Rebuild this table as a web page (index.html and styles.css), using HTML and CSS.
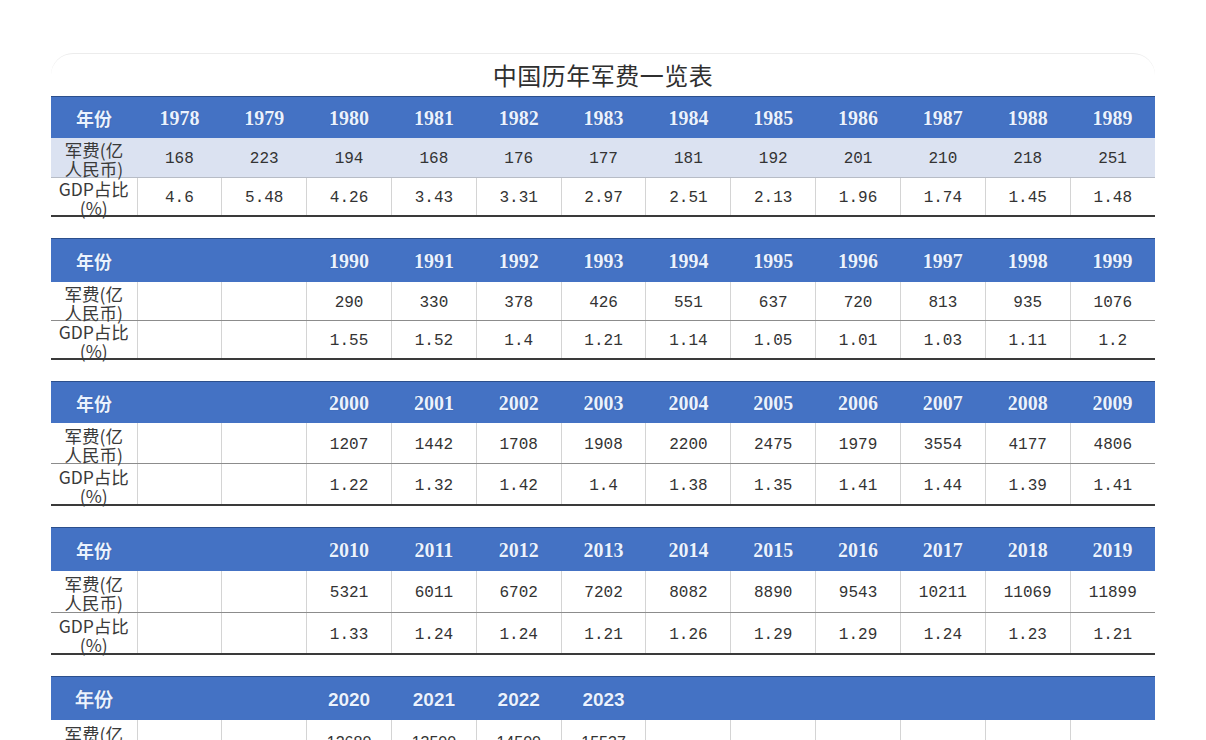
FILE: index.html
```html
<!DOCTYPE html>
<html lang="zh-CN">
<head>
<meta charset="utf-8">
<title>中国历年军费一览表</title>
<link rel="stylesheet" href="styles.css">
</head>
<body>
<div class="card">
  <h1 class="title">中国历年军费一览表</h1>

  <table class="sheet t1">
    <colgroup><col class="c-label"><col span="12"></colgroup>
    <tr class="head"><th class="lbl">年份</th><th>1978</th><th>1979</th><th>1980</th><th>1981</th><th>1982</th><th>1983</th><th>1984</th><th>1985</th><th>1986</th><th>1987</th><th>1988</th><th>1989</th></tr>
    <tr class="spend tint"><td class="lbl"><div class="lbl-in">军费(亿<br>人民币)</div></td><td>168</td><td>223</td><td>194</td><td>168</td><td>176</td><td>177</td><td>181</td><td>192</td><td>201</td><td>210</td><td>218</td><td>251</td></tr>
    <tr class="gdp"><td class="lbl"><div class="lbl-in">GDP占比<br>(%)</div></td><td>4.6</td><td>5.48</td><td>4.26</td><td>3.43</td><td>3.31</td><td>2.97</td><td>2.51</td><td>2.13</td><td>1.96</td><td>1.74</td><td>1.45</td><td>1.48</td></tr>
  </table>

  <table class="sheet t2">
    <colgroup><col class="c-label"><col span="12"></colgroup>
    <tr class="head"><th class="lbl">年份</th><th></th><th></th><th>1990</th><th>1991</th><th>1992</th><th>1993</th><th>1994</th><th>1995</th><th>1996</th><th>1997</th><th>1998</th><th>1999</th></tr>
    <tr class="spend"><td class="lbl"><div class="lbl-in">军费(亿<br>人民币)</div></td><td></td><td></td><td>290</td><td>330</td><td>378</td><td>426</td><td>551</td><td>637</td><td>720</td><td>813</td><td>935</td><td>1076</td></tr>
    <tr class="gdp"><td class="lbl"><div class="lbl-in">GDP占比<br>(%)</div></td><td></td><td></td><td>1.55</td><td>1.52</td><td>1.4</td><td>1.21</td><td>1.14</td><td>1.05</td><td>1.01</td><td>1.03</td><td>1.11</td><td>1.2</td></tr>
  </table>

  <table class="sheet t3">
    <colgroup><col class="c-label"><col span="12"></colgroup>
    <tr class="head"><th class="lbl">年份</th><th></th><th></th><th>2000</th><th>2001</th><th>2002</th><th>2003</th><th>2004</th><th>2005</th><th>2006</th><th>2007</th><th>2008</th><th>2009</th></tr>
    <tr class="spend"><td class="lbl"><div class="lbl-in">军费(亿<br>人民币)</div></td><td></td><td></td><td>1207</td><td>1442</td><td>1708</td><td>1908</td><td>2200</td><td>2475</td><td>1979</td><td>3554</td><td>4177</td><td>4806</td></tr>
    <tr class="gdp"><td class="lbl"><div class="lbl-in">GDP占比<br>(%)</div></td><td></td><td></td><td>1.22</td><td>1.32</td><td>1.42</td><td>1.4</td><td>1.38</td><td>1.35</td><td>1.41</td><td>1.44</td><td>1.39</td><td>1.41</td></tr>
  </table>

  <table class="sheet t4">
    <colgroup><col class="c-label"><col span="12"></colgroup>
    <tr class="head"><th class="lbl">年份</th><th></th><th></th><th>2010</th><th>2011</th><th>2012</th><th>2013</th><th>2014</th><th>2015</th><th>2016</th><th>2017</th><th>2018</th><th>2019</th></tr>
    <tr class="spend"><td class="lbl"><div class="lbl-in">军费(亿<br>人民币)</div></td><td></td><td></td><td>5321</td><td>6011</td><td>6702</td><td>7202</td><td>8082</td><td>8890</td><td>9543</td><td>10211</td><td>11069</td><td>11899</td></tr>
    <tr class="gdp"><td class="lbl"><div class="lbl-in">GDP占比<br>(%)</div></td><td></td><td></td><td>1.33</td><td>1.24</td><td>1.24</td><td>1.21</td><td>1.26</td><td>1.29</td><td>1.29</td><td>1.24</td><td>1.23</td><td>1.21</td></tr>
  </table>

  <table class="sheet t5">
    <colgroup><col class="c-label"><col span="12"></colgroup>
    <tr class="head sans"><th class="lbl">年份</th><th></th><th></th><th>2020</th><th>2021</th><th>2022</th><th>2023</th><th></th><th></th><th></th><th></th><th></th><th></th></tr>
    <tr class="spend sans"><td class="lbl"><div class="lbl-in">军费(亿<br>人民币)</div></td><td></td><td></td><td>12680</td><td>13500</td><td>14500</td><td>15537</td><td></td><td></td><td></td><td></td><td></td><td></td></tr>
  </table>
</div>
</body>
</html>
```

FILE: styles.css
```css
html, body {
  margin: 0;
  padding: 0;
  background: #ffffff;
}

body {
  font-family: "Noto Sans CJK SC", "Noto Sans", sans-serif;
  overflow: hidden;
}

.card {
  width: 1104px;
  margin: 53px 0 0 51px;
  border-top: 1px solid #ececec;
  border-radius: 22px 22px 0 0;
  background: #ffffff;
}

.title {
  margin: 0;
  height: 42px;
  display: flex;
  align-items: center;
  justify-content: center;
  padding-bottom: 1px;
  box-sizing: border-box;
  font-family: "Noto Sans CJK SC", sans-serif;
  font-weight: 400;
  font-size: 24px;
  letter-spacing: 0.5px;
  color: #2f2f2f;
}

.sheet {
  width: 1104px;
  table-layout: fixed;
  border-collapse: collapse;
  margin-bottom: 21px;
}

.c-label {
  width: 86px;
}

.sheet th,
.sheet td {
  padding: 0;
  text-align: center;
  vertical-align: middle;
  overflow: visible;
  white-space: nowrap;
}

.head th {
  background: #4472c4;
  border-top: 1px solid #2c4f8c;
  color: #eaf2ff;
  font-family: "Liberation Serif", serif;
  font-weight: 700;
  font-size: 20px;
  padding-top: 2px;
  text-shadow: 0 0 1px rgba(20, 40, 90, 0.5);
}

.head th.lbl {
  font-family: "Noto Sans CJK SC", sans-serif;
  font-size: 18px;
  font-weight: 700;
  padding-top: 0;
}

.head.sans th {
  font-family: "Liberation Sans", sans-serif;
  font-weight: 700;
  font-size: 19px;
}

.spend td,
.gdp td {
  font-family: "Liberation Mono", monospace;
  font-size: 16px;
  color: #333333;
  padding-top: 3px;
  border-right: 1px solid #d4d4d4;
}

.spend td:last-child,
.gdp td:last-child {
  border-right: none;
}

.spend.sans td {
  font-family: "Liberation Sans", sans-serif;
}

.spend td {
  border-bottom: 1px solid #8c8c8c;
}

.tint td {
  background: #dbe2f1;
  border-right: none;
  border-bottom: 1px solid #b7bcc6;
}

.gdp td {
  border-bottom: 2px solid #3a3a3a;
}

.sheet td.lbl {
  padding-top: 0;
}

.lbl-in {
  margin: -6px 0 -6px;
  padding-top: 3px;
  font-family: "Noto Sans CJK SC", sans-serif;
  font-size: 17.5px;
  line-height: 19px;
  color: #3a3a3a;
}

.t1 .head th { height: 39px; }
.t1 .spend td { height: 36px; }
.t1 .gdp td { height: 34px; }

.t2 .head th { height: 41px; }
.t2 .spend td { height: 35px; }
.t2 .gdp td { height: 34px; }

.t3 .head th { height: 39px; }
.t3 .spend td { height: 37px; }
.t3 .gdp td { height: 37px; }

.t4 .head th { height: 41px; }
.t4 .spend td { height: 38px; }
.t4 .gdp td { height: 37px; }

.t5 .head th { height: 41px; }
.t5 .spend td { height: 40px; border-bottom: none; }
```
